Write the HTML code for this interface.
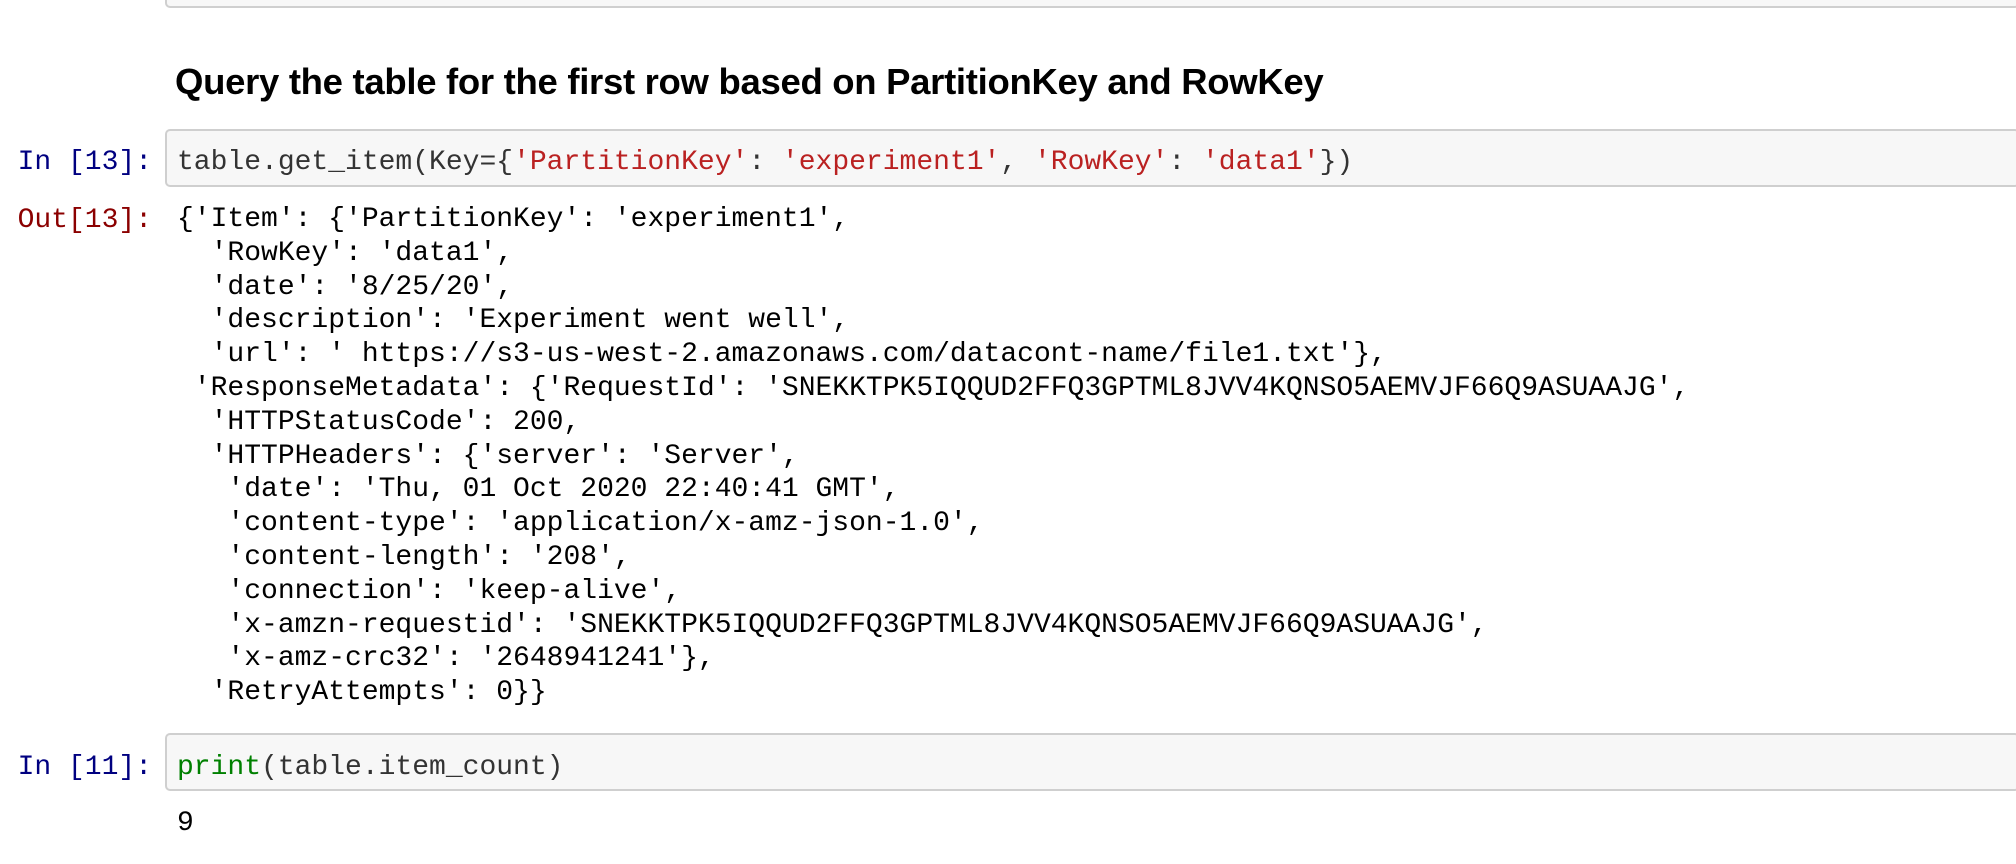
<!DOCTYPE html>
<html><head><style>
body{margin:0;width:2016px;height:864px;background:#fff;position:relative;overflow:hidden;font-family:"Liberation Mono",monospace;}
.box{position:absolute;left:165px;right:-4px;background:#f7f7f7;border:2px solid #cfcfcf;border-radius:5px;box-sizing:border-box;}
pre{margin:0;font-family:"Liberation Mono",monospace;font-size:28px;position:absolute;white-space:pre;}
.p{position:absolute;width:152px;left:0;text-align:right;font-size:28px;white-space:pre;}
.in{color:#000080}.out{color:#8b0000}
.s{color:#ba2121}.g{color:#008000}
h2{position:absolute;left:175px;top:61px;margin:0;font-family:"Liberation Sans",Arial,sans-serif;font-weight:bold;font-size:36.5px;letter-spacing:-0.3px;color:#000;}
</style></head><body>
<div class="box" style="top:-10px;height:18px"></div>
<h2>Query the table for the first row based on PartitionKey and RowKey</h2>
<div class="box" style="top:129px;height:58px"></div>
<div class="p in" style="top:147px">In [13]:</div>
<pre style="left:177px;top:147px;color:#333">table.get_item(Key={<span class="s">'PartitionKey'</span>: <span class="s">'experiment1'</span>, <span class="s">'RowKey'</span>: <span class="s">'data1'</span>})</pre>
<div class="p out" style="top:205px">Out[13]:</div>
<pre style="left:177px;top:203px;line-height:33.8px;color:#000">{'Item': {'PartitionKey': 'experiment1',
  'RowKey': 'data1',
  'date': '8/25/20',
  'description': 'Experiment went well',
  'url': ' https://s3-us-west-2.amazonaws.com/datacont-name/file1.txt'},
 'ResponseMetadata': {'RequestId': 'SNEKKTPK5IQQUD2FFQ3GPTML8JVV4KQNSO5AEMVJF66Q9ASUAAJG',
  'HTTPStatusCode': 200,
  'HTTPHeaders': {'server': 'Server',
   'date': 'Thu, 01 Oct 2020 22:40:41 GMT',
   'content-type': 'application/x-amz-json-1.0',
   'content-length': '208',
   'connection': 'keep-alive',
   'x-amzn-requestid': 'SNEKKTPK5IQQUD2FFQ3GPTML8JVV4KQNSO5AEMVJF66Q9ASUAAJG',
   'x-amz-crc32': '2648941241'},
  'RetryAttempts': 0}}</pre>
<div class="box" style="top:733px;height:58px"></div>
<div class="p in" style="top:752px">In [11]:</div>
<pre style="left:177px;top:752px;color:#333"><span class="g">print</span>(table.item_count)</pre>
<pre style="left:177px;top:808px;color:#000">9</pre>
</body></html>
